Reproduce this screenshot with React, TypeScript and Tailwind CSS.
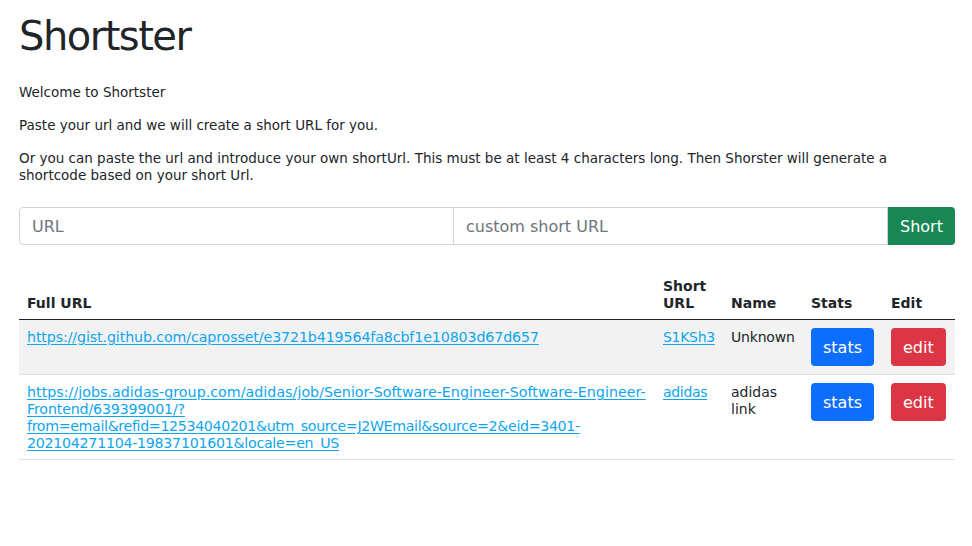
import React from "react";

const linkCls = "text-[#0ea5f0] underline underline-offset-[2px]";

export default function App() {
  return (
    <div className="min-h-[546px] bg-white pl-[19px] pr-[17px] font-['DejaVu_Sans',sans-serif] text-[#212529]">
      <h1 className="pt-[12px] text-[40px] leading-[48px] font-normal tracking-[-1.5px]">Shortster</h1>
      <div className="mt-[24px] text-[13.5px] leading-[17px]">
        <p className="mb-[16px]">Welcome to Shortster</p>
        <p className="mb-[16px]">Paste your url and we will create a short URL for you.</p>
        <p>
          <span className="whitespace-nowrap">Or you can paste the url and introduce your own shortUrl. This must be at least 4 characters long. Then Shorster will generate a</span>
          <br />
          <span className="whitespace-nowrap">shortcode based on your short Url.</span>
        </p>
      </div>
      <div className="mt-[23px] flex h-[38px] w-full">
        <input
          className="h-full w-[435px] rounded-l-[4px] border border-[#ced4da] px-[12px] text-[16px] text-[#212529] outline-none placeholder:text-[#6c757d]"
          placeholder="URL"
        />
        <input
          className="-ml-px h-full flex-1 border border-[#ced4da] px-[12px] text-[16px] text-[#212529] outline-none placeholder:text-[#6c757d]"
          placeholder="custom short URL"
        />
        <button className="h-full w-[67px] rounded-r-[4px] bg-[#198754] pt-[1px] text-[16px] text-white">Short</button>
      </div>
      <table className="mt-[24px] w-full table-fixed border-collapse text-[14px] leading-[17px]">
        <colgroup>
          <col className="w-[636px]" />
          <col className="w-[68px]" />
          <col className="w-[80px]" />
          <col className="w-[80px]" />
          <col className="w-[72px]" />
        </colgroup>
        <thead>
          <tr className="border-b border-[#212529]">
            <th className="px-[8px] pt-[9px] pb-[7px] text-left align-bottom font-bold">Full URL</th>
            <th className="px-[8px] pt-[9px] pb-[7px] text-left align-bottom font-bold">Short<br />URL</th>
            <th className="px-[8px] pt-[9px] pb-[7px] text-left align-bottom font-bold">Name</th>
            <th className="px-[8px] pt-[9px] pb-[7px] text-left align-bottom font-bold">Stats</th>
            <th className="px-[8px] pt-[9px] pb-[7px] text-left align-bottom font-bold">Edit</th>
          </tr>
        </thead>
        <tbody>
          <tr className="border-b border-[#dee2e6] bg-[#f2f2f2]">
            <td className="px-[8px] pt-[9px] pb-[8px] align-top">
              <a className={linkCls + " whitespace-nowrap text-[14.2px] tracking-[-0.1px]"} href="#">https://gist.github.com/caprosset/e3721b419564fa8cbf1e10803d67d657</a>
            </td>
            <td className="px-[8px] pt-[9px] pb-[8px] align-top">
              <a className={linkCls + " tracking-[-0.3px]"} href="#">S1KSh3</a>
            </td>
            <td className="px-[8px] pt-[9px] pb-[8px] align-top whitespace-nowrap tracking-[-0.2px]">Unknown</td>
            <td className="p-[8px] align-top">
              <button className="h-[38px] rounded-[4px] bg-[#0d6efd] px-[12px] text-[16px] text-white">stats</button>
            </td>
            <td className="p-[8px] align-top">
              <button className="h-[38px] rounded-[4px] bg-[#dc3545] px-[12px] text-[16px] text-white">edit</button>
            </td>
          </tr>
          <tr className="border-b border-[#dee2e6] bg-white">
            <td className="px-[8px] pt-[9px] pb-[7px] align-top">
              <a className={linkCls + " text-[14.2px]"} href="#">
                <span className="whitespace-nowrap tracking-[0.05px]">https://jobs.adidas-group.com/adidas/job/Senior-Software-Engineer-Software-Engineer-</span>
                <br />
                <span className="whitespace-nowrap tracking-[-0.15px]">Frontend/639399001/?</span>
                <br />
                <span className="whitespace-nowrap tracking-[-0.34px]">from=email&amp;refid=12534040201&amp;utm_source=J2WEmail&amp;source=2&amp;eid=3401-</span>
                <br />
                <span className="whitespace-nowrap tracking-[-0.26px]">202104271104-19837101601&amp;locale=en_US</span>
              </a>
            </td>
            <td className="px-[8px] pt-[9px] pb-[8px] align-top">
              <a className={linkCls + " tracking-[-0.3px]"} href="#">adidas</a>
            </td>
            <td className="px-[8px] pt-[9px] pb-[8px] align-top">adidas<br />link</td>
            <td className="p-[8px] align-top">
              <button className="h-[38px] rounded-[4px] bg-[#0d6efd] px-[12px] text-[16px] text-white">stats</button>
            </td>
            <td className="p-[8px] align-top">
              <button className="h-[38px] rounded-[4px] bg-[#dc3545] px-[12px] text-[16px] text-white">edit</button>
            </td>
          </tr>
        </tbody>
      </table>
    </div>
  );
}
